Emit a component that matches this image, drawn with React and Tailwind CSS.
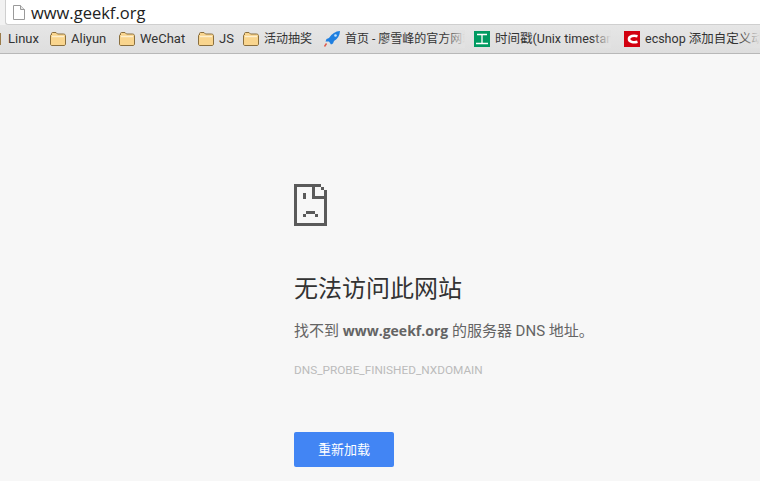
const CJK = 'Roboto,"Noto Sans CJK SC",sans-serif';
const OPEN = '"Open Sans","Noto Sans CJK SC",sans-serif';

function Folder() {
  return (
    <svg width="16" height="14" viewBox="0 0 16 14" className="shrink-0">
      <path d="M1.5 3V1.5C1.5 1 2 .5 2.5 .5H6L7.5 2H13.5C14.5 2 15.5 2.7 15.5 3.5V12C15.5 13 14.8 13.5 14 13.5H2C1 13.5 .5 13 .5 12V3.5C.5 3 1 2.5 1.5 2.5Z" fill="#f9d58e" stroke="#8a6f3e" strokeWidth="1" />
      <path d="M2 4.5H14" stroke="#fdf0cf" strokeWidth="1.4" />
    </svg>
  );
}

function Rocket() {
  return (
    <svg width="18" height="18" viewBox="0 0 18 18" className="shrink-0">
      <path d="M17 1C12.5 1.3 9 3.5 6 8L3.5 9L2.5 11.5L6 11.5L8 14.5L10 13.5L11 11C14.5 9 16.8 5.5 17 1Z" fill="#1f7fe0" />
      <circle cx="12.5" cy="5.5" r="1.3" fill="#bfe3ff" />
      <path d="M1.5 16.5L3.5 13.5" stroke="#e05a4a" strokeWidth="1.4" />
    </svg>
  );
}

function GongIcon() {
  return (
    <svg width="16" height="16" viewBox="0 0 16 16" className="shrink-0">
      <rect width="16" height="16" fill="#009a61" />
      <path d="M3 3.5H13M8 3.5V12.5M2 12.5H14" stroke="#fff" strokeWidth="1.3" fill="none" />
    </svg>
  );
}

function CIcon() {
  return (
    <svg width="16" height="16" viewBox="0 0 16 16" className="shrink-0">
      <rect width="16" height="16" fill="#d2000f" />
      <path d="M13.5 5.2C11.5 4.6 9.5 4.6 8 5C6 5.5 5 6.6 5 8C5 9.4 6 10.5 8 11C9.5 11.4 11.5 11.4 13.5 10.8" stroke="#fff" strokeWidth="2.6" fill="none" />
    </svg>
  );
}

function SadDoc() {
  const cells = [
    [0,0,9,1],[0,0,1,14],[0,13,11,1],[10,2,1,12],[6,0,1,5],[6,4,5,1],[9,1,1,1],
    [3,3,1,2],[4,9,3,1],[3,10,1,1],[7,10,1,1],
  ];
  return (
    <svg width="33" height="42" viewBox="0 0 11 14" shapeRendering="crispEdges" className="block">
      {cells.map(([x, y, w, h], i) => (
        <rect key={i} x={x} y={y} width={w} height={h} fill="#5a5a5a" />
      ))}
    </svg>
  );
}

function Bookmark({ icon, label, width, gap = 'ml-[5px]', size = 'text-[13px]', fade }) {
  return (
    <div className="flex items-center shrink-0 overflow-hidden relative" style={{ width }}>
      {icon}
      <span className={`${gap} ${size} whitespace-nowrap text-[#333]`}>{label}</span>
      {fade && <div className="absolute right-0 top-0 bottom-0 w-5 bg-gradient-to-r from-transparent to-[#e2e2e2]" />}
    </div>
  );
}

export default function App() {
  return (
    <div className="w-[760px] h-[481px] overflow-hidden flex flex-col bg-[#f7f7f7]" style={{ fontFamily: CJK }}>
      <div className="h-[25px] bg-[#f2f2f2] pl-[5px] shrink-0">
        <div className="h-[25px] bg-white border-l border-b border-[#cfcfcf] rounded-bl-[3px] flex items-center pl-[7px]">
          <svg width="12" height="15" viewBox="0 0 12 15" className="shrink-0">
            <path d="M.5 .5H7.5L11.5 4.5V14.5H.5Z" fill="#fff" stroke="#9a9a9a" />
            <path d="M7.5 .5V4.5H11.5" fill="#e6e6e6" stroke="#9a9a9a" />
          </svg>
          <span className="ml-[6px] text-[16.5px] leading-[25px] text-[#222]" style={{ fontFamily: OPEN }}>www.geekf.org</span>
        </div>
      </div>
      <div className="h-[29px] shrink-0 flex items-center bg-gradient-to-b from-[#e6e6e6] to-[#dedede] border-b border-[#b8b8b8]">
        <div className="w-[1px] h-[12px] bg-[#9a7b4a] mr-[7px]" />
        <span className="text-[13px] text-[#333] w-[42px]">Linux</span>
        <Bookmark icon={<Folder />} label="Aliyun" width="69px" />
        <Bookmark icon={<Folder />} label="WeChat" width="79px" />
        <Bookmark icon={<Folder />} label="JS" width="45px" />
        <Bookmark icon={<Folder />} label="活动抽奖" width="80px" size="text-[12px]" />
        <Bookmark icon={<Rocket />} label="首页 - 廖雪峰的官方网站" width="142px" gap="ml-[4px]" size="text-[12px]" fade />
        <div className="w-[9px]" />
        <Bookmark icon={<GongIcon />} label="时间戳(Unix timestamp)" width="137px" size="text-[12.5px]" fade />
        <div className="w-[13px]" />
        <Bookmark icon={<CIcon />} label="ecshop 添加自定义动态" width="136px" size="text-[12.5px]" fade />
      </div>
      <main className="pl-[294px] pt-[130px] flex flex-col items-start">
        <SadDoc />
        <h1 className="mt-[47px] text-[24px] leading-[32px] font-normal text-[#333]">无法访问此网站</h1>
        <p className="mt-[16px] text-[15px] leading-[20px] text-[#646464]">
          找不到 <b className="font-bold text-[14px]" style={{ fontFamily: OPEN }}>www.geekf.org</b> 的服务器 DNS 地址。
        </p>
        <p className="mt-[21px] text-[11.8px] leading-[16px] text-[#bbb]">DNS_PROBE_FINISHED_NXDOMAIN</p>
        <button className="mt-[54px] w-[100px] h-[35px] bg-[#4285f4] rounded-[2px] text-white text-[13px]">重新加载</button>
      </main>
    </div>
  );
}
